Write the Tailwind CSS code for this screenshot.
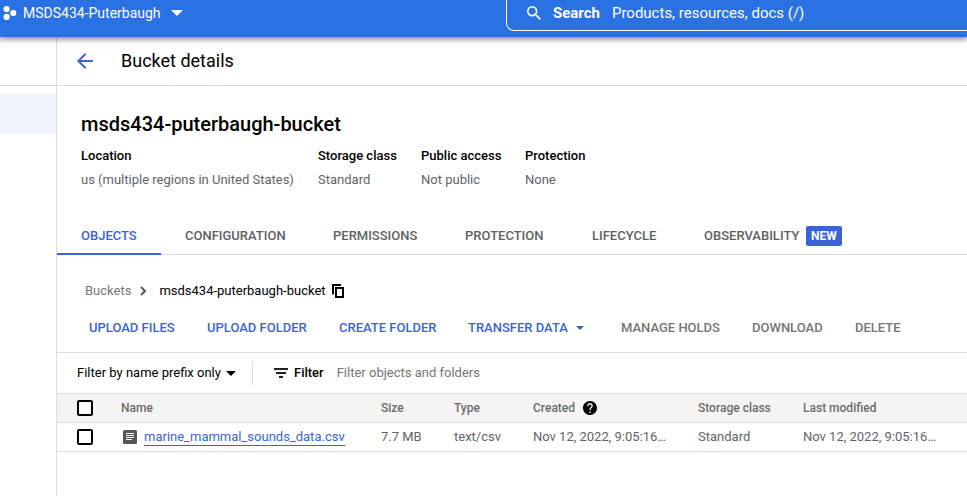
<!DOCTYPE html>
<html lang="en">
<head>
<meta charset="utf-8">
<meta name="viewport" content="width=device-width, initial-scale=1">
<title>Bucket details</title>
<script src="https://cdn.jsdelivr.net/npm/@tailwindcss/browser@4"></script>
</head>
<body class="flex min-h-screen flex-col overflow-x-hidden bg-white font-[Roboto,sans-serif] text-[13px] leading-5 text-black">
  <header class="relative z-10 flex h-[37px] items-start bg-[#2a71e3] text-white shadow-[0_1px_6px_1px_rgba(0,0,0,0.5)]">
    <div class="w-[506px] shrink-0">
      <button class="flex h-[26px] items-center pl-[3px] text-sm">
        <svg class="mr-[6px] h-[14px] w-[14px]" viewBox="0 0 14 14" fill="currentColor" aria-hidden="true"><circle cx="3.6" cy="3.1" r="3.1"/><circle cx="3.6" cy="10.9" r="3.1"/><circle cx="10.3" cy="7" r="3.1"/></svg>
        MSDS434-Puterbaugh
        <svg class="ml-[10px] h-[6px] w-[12px]" viewBox="0 0 12 6" fill="currentColor" aria-hidden="true"><path d="M0 0h12L6 6z"/></svg>
      </button>
    </div>
    <label class="flex h-[31px] min-w-0 flex-1 items-start rounded-bl-lg border-b border-l border-white pl-[20px]">
      <span class="flex h-[26px] items-center text-[15px] font-bold">
        <svg class="mr-3 h-[14px] w-[14px]" viewBox="3 3 17.5 17.5" fill="currentColor" aria-hidden="true"><path d="M15.5 14h-.79l-.28-.27A6.471 6.471 0 0 0 16 9.5 6.5 6.5 0 1 0 9.5 16c1.61 0 3.09-.59 4.23-1.57l.27.28v.79l5 4.99L20.49 19l-4.99-5zm-6 0C7.01 14 5 11.99 5 9.5S7.01 5 9.5 5 14 7.01 14 9.5 11.99 14 9.5 14z"/></svg>
        Search
      </span>
      <input type="text" placeholder="Products, resources, docs (/)" class="ml-3 h-[26px] min-w-0 flex-1 bg-transparent text-[15px] outline-none placeholder:text-white">
    </label>
  </header>

  <div class="flex flex-1">
    <aside class="w-[57px] shrink-0 border-r border-[#dadce0]">
      <div class="h-[49px] border-b border-[#dadce0]"></div>
      <div class="mt-2 h-10 bg-[#f0f4ff]"></div>
    </aside>

    <main class="min-w-0 flex-1">
      <div class="flex h-[49px] items-center border-b border-[#dadce0] pl-5">
        <button aria-label="Back">
          <svg class="h-4 w-4" viewBox="4 4 16 16" fill="#3b63d6" aria-hidden="true"><path d="M20 11H7.83l5.59-5.59L12 4l-8 8 8 8 1.41-1.41L7.83 13H20z"/></svg>
        </button>
        <h1 class="ml-7 text-lg">Bucket details</h1>
      </div>

      <section class="px-6 pt-6">
        <h2 class="text-xl leading-7 font-medium">msds434-puterbaugh-bucket</h2>
        <dl class="mt-[6px] flex gap-6 leading-6 whitespace-nowrap">
          <div class="w-[213px]"><dt class="font-medium">Location</dt><dd class="text-[#5f6368]">us (multiple regions in United States)</dd></div>
          <div class="w-[79px]"><dt class="font-medium">Storage class</dt><dd class="text-[#5f6368]">Standard</dd></div>
          <div class="w-[80px]"><dt class="font-medium">Public access</dt><dd class="text-[#5f6368]">Not public</dd></div>
          <div><dt class="font-medium">Protection</dt><dd class="text-[#5f6368]">None</dd></div>
        </dl>
      </section>

      <nav class="mt-[26px] flex h-[37px] border-b border-[#dadce0] font-medium whitespace-nowrap text-[#5f5f5f]">
        <a href="#" class="-mb-px w-[104px] border-b-2 border-[#3b63d6] pt-2 pl-6 text-[#3b63d6]">OBJECTS</a>
        <a href="#" class="w-[148px] pt-2 pl-6">CONFIGURATION</a>
        <a href="#" class="w-[132px] pt-2 pl-6">PERMISSIONS</a>
        <a href="#" class="w-[127px] pt-2 pl-6">PROTECTION</a>
        <a href="#" class="w-[112px] pt-2 pl-6">LIFECYCLE</a>
        <a href="#" class="flex items-start pt-2 pl-6"><span class="w-[102px]">OBSERVABILITY</span><span class="rounded-xs bg-[#3b63d6] px-[5px] text-xs leading-5 font-bold text-white">NEW</span></a>
      </nav>

      <div class="mt-[26px] flex h-5 items-center pl-7">
        <a href="#" class="text-[#757575]">Buckets</a>
        <svg class="mr-3 ml-[9px] h-[10px] w-[7px]" viewBox="0 0 7 10" fill="none" stroke="#555" stroke-width="2" aria-hidden="true"><path d="M1 1l4 4-4 4"/></svg>
        <span>msds434-puterbaugh-bucket</span>
        <button aria-label="Copy" class="ml-[6px]">
          <svg class="h-[14px] w-[12px]" viewBox="0 0 12 14" fill="none" stroke="#000" stroke-width="2" aria-hidden="true"><path d="M1 10.5V1h8M4 4h7v9H4z"/></svg>
        </button>
      </div>

      <div class="mt-[17px] flex h-[35px] items-start border-b border-[#dadce0] pl-8 font-medium whitespace-nowrap text-[#3b63d6]">
        <button class="w-[118px] text-left">UPLOAD FILES</button>
        <button class="w-[132px] text-left">UPLOAD FOLDER</button>
        <button class="w-[129px] text-left">CREATE FOLDER</button>
        <button class="flex w-[153px] items-center">TRANSFER DATA <svg class="ml-2 h-1 w-2" viewBox="0 0 8 4" fill="currentColor" aria-hidden="true"><path d="M0 0h8L4 4z"/></svg></button>
        <button disabled class="w-[131px] text-left text-[#757575]">MANAGE HOLDS</button>
        <button disabled class="w-[103px] text-left text-[#757575]">DOWNLOAD</button>
        <button disabled class="text-left text-[#757575]">DELETE</button>
      </div>

      <div class="flex h-10 items-center pl-5 whitespace-nowrap">
        <button class="flex h-6 w-44 items-center border-r border-[#dadce0]">Filter by name prefix only <svg class="ml-[5px] h-[5px] w-[10px]" viewBox="0 0 10 5" fill="currentColor" aria-hidden="true"><path d="M0 0h10L5 5z"/></svg></button>
        <label for="filter" class="flex items-center pl-[21px] font-medium">
          <svg class="mr-[6px] h-[10px] w-[14px]" viewBox="0 0 14 10" fill="#202124" aria-hidden="true"><path d="M0 0h14v2H0zM2 4h10v2H2zM5 8h4v2H5z"/></svg>
          Filter
        </label>
        <input id="filter" type="text" placeholder="Filter objects and folders" class="ml-[13px] min-w-0 flex-1 outline-none placeholder:text-[#757575]">
      </div>

      <table class="w-full table-fixed border-collapse text-left whitespace-nowrap text-[#5f6368]">
        <colgroup><col class="w-16"><col class="w-[260px]"><col class="w-[73px]"><col class="w-[79px]"><col class="w-[165px]"><col class="w-[105px]"><col></colgroup>
        <thead>
          <tr class="h-[29px] border-y border-[#dadce0] bg-[#f4f4f4] text-xs text-[#6b6b6b]">
            <th class="pl-5"><input type="checkbox" aria-label="Select all objects" class="block h-4 w-4 appearance-none rounded-xs border-2 border-black bg-white"></th>
            <th class="font-medium">Name</th>
            <th class="font-medium">Size</th>
            <th class="font-medium">Type</th>
            <th class="font-medium"><span class="flex items-center">Created
              <svg class="ml-2 h-[14px] w-[14px]" viewBox="2 2 20 20" fill="#000" aria-label="Help"><path d="M12 2C6.48 2 2 6.48 2 12s4.480 10 10 10 10-4.480 10-10S17.520 2 12 2zm1 17h-2v-2h2v2zm2.070-7.750l-.9.920C13.450 12.900 13 13.500 13 15h-2v-.5c0-1.100.450-2.100 1.170-2.830l1.240-1.260c.370-.360.590-.860.590-1.410 0-1.100-.9-2-2-2s-2 .9-2 2H8c0-2.210 1.790-4 4-4s4 1.790 4 4c0 .880-.360 1.680-.930 2.250z"/></svg></span></th>
            <th class="font-medium">Storage class</th>
            <th class="font-medium">Last modified</th>
          </tr>
        </thead>
        <tbody>
          <tr class="h-[29px] border-b border-[#dadce0]">
            <td class="pl-5"><input type="checkbox" aria-label="Select marine_mammal_sounds_data.csv" class="block h-4 w-4 appearance-none rounded-xs border-2 border-black bg-white"></td>
            <td><span class="flex items-center pl-[2px]">
              <svg class="mr-[7px] h-[14px] w-[14px]" viewBox="0 0 14 14" aria-hidden="true"><rect width="14" height="14" rx="1.5" fill="#555"/><path d="M3 3.500h8M3 5.500h8M3 7.500h8M3 9.500h6" stroke="#fff"/></svg>
              <a href="#" class="border-b border-[#3b63d6] leading-4 text-[#3b63d6]">marine_mammal_sounds_data.csv</a></span></td>
            <td>7.7 MB</td>
            <td>text/csv</td>
            <td>Nov 12, 2022, 9:05:16…</td>
            <td>Standard</td>
            <td>Nov 12, 2022, 9:05:16…</td>
          </tr>
        </tbody>
      </table>
    </main>
  </div>
</body>
</html>
